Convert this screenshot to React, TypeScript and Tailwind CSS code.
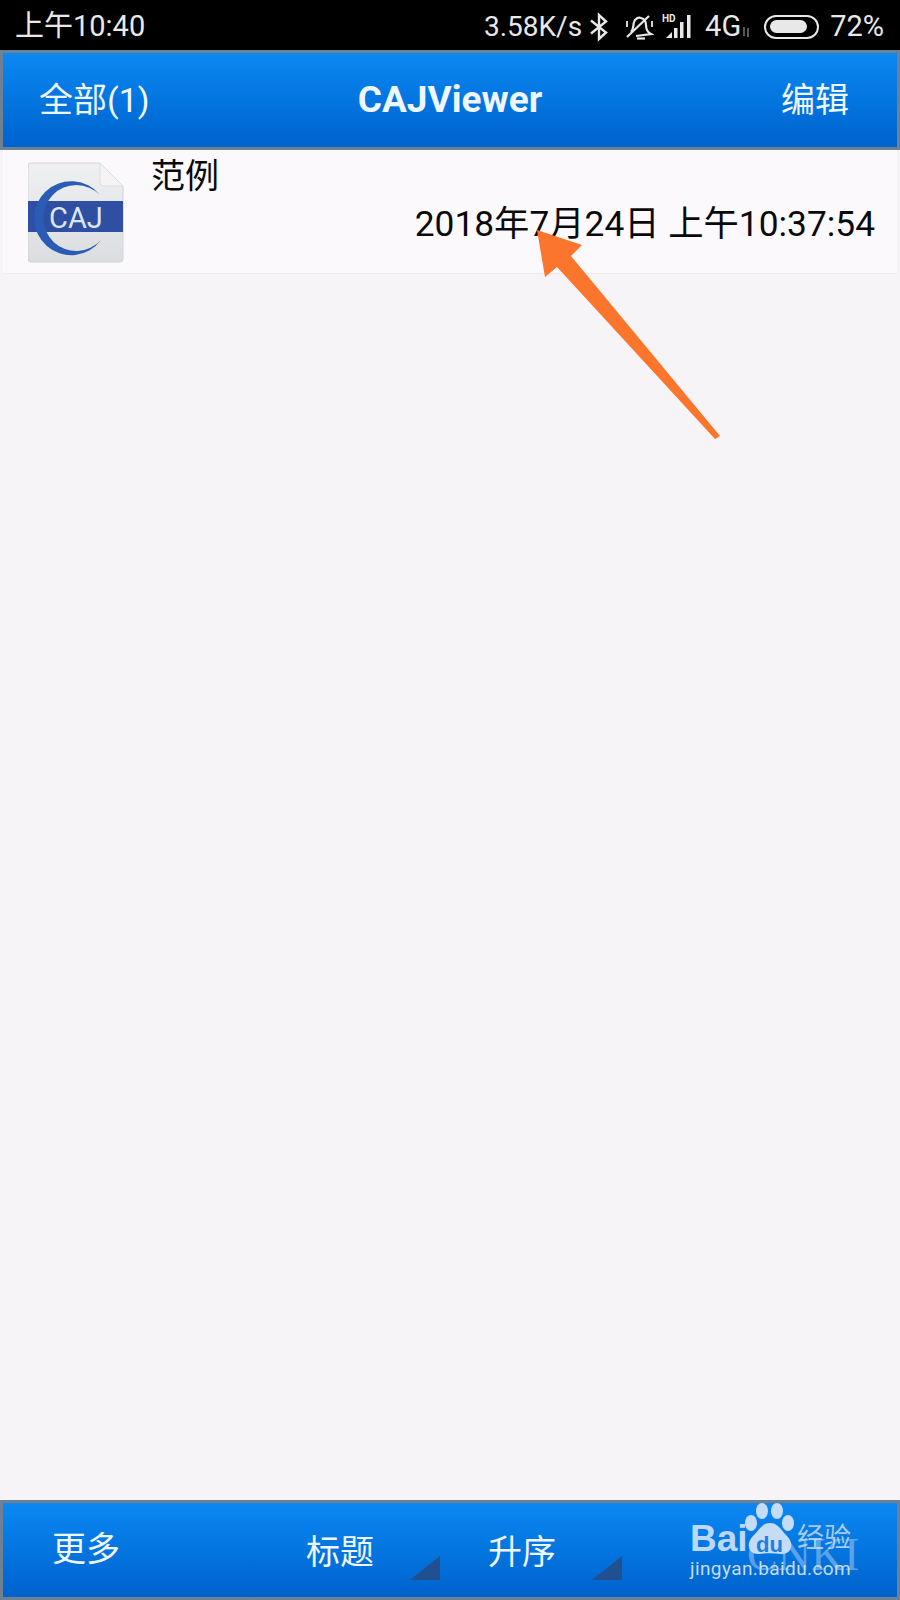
const cjk = "font-['Roboto','Noto_Sans_CJK_SC',sans-serif]";

function StatusIcons() {
  return (
    <>
      <svg width="20" height="30" viewBox="0 0 20 30" fill="none" stroke="#e8e8e8" strokeWidth="2.4" className="ml-[7px]">
        <path d="M2 8.5 L17 20.5 L10 27 V3 L17 9.5 L2 21.5" />
      </svg>
      <svg width="30" height="30" viewBox="0 0 30 30" fill="none" stroke="#e8e8e8" strokeWidth="2.2" className="ml-[15px]">
        <path d="M7 20 C10 17 9 13 10 10 C11 7 14 5 17 6 C21 7 22 10 22 13 C22 17 23 20 27 22 L12 24" />
        <path d="M3 25 L25 4" />
        <path d="M13 26.5 H21" />
        <path d="M3 9 V15 M28 9 V15" strokeWidth="1.8" />
      </svg>
      <svg width="32" height="30" viewBox="0 0 32 30" className="ml-[8px]" fill="#e8e8e8">
        <text x="0" y="10" fontSize="10" fontWeight="700" fontFamily="Roboto, sans-serif">HD</text>
        <path d="M4 26 L10 20 V26 Z" />
        <rect x="12" y="16" width="3.5" height="10" />
        <rect x="18" y="10" width="3.5" height="16" />
        <rect x="25" y="3" width="3.5" height="23" />
      </svg>
    </>
  );
}

function Battery() {
  return (
    <div className="ml-[13px] flex h-[24px] w-[55px] items-center rounded-full border-2 border-[#e8e8e8] px-[4px]">
      <div className="h-[13px] w-[37px] rounded-full bg-[#e8e8e8]" />
    </div>
  );
}

function StatusBar() {
  return (
    <div className="flex h-[50px] items-center justify-between bg-black pl-[15px] pr-[16px] pt-[3px] text-[29px] leading-[47px] text-[#e8e8e8]">
      <span>上午10:40</span>
      <div className="flex items-center">
        <span className="text-[28px]">3.58K/s</span>
        <StatusIcons />
        <span className="ml-[11px]">4G</span>
        <svg width="10" height="10" viewBox="0 0 10 10" stroke="#777" strokeWidth="1.5" className="mt-[10px]">
          <path d="M3 0 V9 M7 1 V10" />
        </svg>
        <Battery />
        <span className="ml-[11px]">72%</span>
      </div>
    </div>
  );
}

function FileIcon() {
  return (
    <svg width="96" height="101" viewBox="0 0 96 101" className="mt-[12px] shrink-0">
      <defs>
        <linearGradient id="sheet" x1="0" y1="0" x2="0" y2="1">
          <stop offset="0" stopColor="#eef0f2" />
          <stop offset="1" stopColor="#dcdde0" />
        </linearGradient>
      </defs>
      <path d="M3 1 H72 L95 24 V97 Q95 100 92 100 H3 Q0 100 0 97 V4 Q0 1 3 1 Z" fill="url(#sheet)" stroke="#d2d3d6" />
      <path d="M72 1 V20 Q72 24 76 24 H95 Z" fill="#f4f4f6" stroke="#dddde0" />
      <rect x="0" y="39" width="95" height="31" fill="#2f4fa3" />
      <path d="M72 33 A37 37 0 1 0 73 78 A33 33 0 1 1 72 33 Z" fill="#2a5cb6" />
      <text x="21" y="66" fontSize="29" fontFamily="Roboto, sans-serif" fill="#dfe6f5">CAJ</text>
    </svg>
  );
}

function Corner() {
  return (
    <svg width="30" height="24" viewBox="0 0 30 24" className="absolute left-[104px] top-[29px]">
      <path d="M30 0 V24 H0 Z" fill="#20508f" />
    </svg>
  );
}

function Arrow() {
  return (
    <svg width="900" height="460" viewBox="0 0 900 460" className="pointer-events-none absolute left-0 top-0">
      <path d="M537 230 L582 245 L571 256 L720 436 L715 439 L557 267 L545 277 Z" fill="#fb762c" />
    </svg>
  );
}

function Watermark() {
  return (
    <div className="pointer-events-none absolute left-[680px] top-[1500px] h-[100px] w-[220px] text-white">
      <span className="absolute left-[67px] top-[32px] font-['Liberation_Serif',serif] text-[46px] leading-[46px] text-white/35">CNKI</span>
      <svg width="52" height="54" viewBox="0 0 52 54" className="absolute left-[64px] top-[3px]" fill="#c5dcf6">
        <ellipse cx="18" cy="8" rx="6" ry="8" />
        <ellipse cx="33" cy="8" rx="6" ry="8" />
        <ellipse cx="7" cy="20" rx="6" ry="8" />
        <ellipse cx="44" cy="20" rx="6" ry="8" />
        <path d="M26 20 C34 20 37 27 43 33 C51 41 47 52 37 51 C30 50 22 50 15 51 C5 52 1 41 9 33 C15 27 18 20 26 20 Z" />
      </svg>
      <span className="absolute left-[10px] top-[19px] font-['Liberation_Sans',sans-serif] text-[37px] font-bold leading-[40px] text-[#bcd8f6]">Bai</span>
      <span className="absolute left-[76px] top-[33px] font-['Liberation_Sans',sans-serif] text-[22px] font-bold leading-[24px] text-[#1f7ce0]">du</span>
      <span className={`absolute left-[117px] top-[22px] ${cjk} text-[27px] leading-[32px] text-[#c5dcf6]/85`}>经验</span>
      <span className="absolute left-[10px] top-[58px] font-['Roboto',sans-serif] text-[19px] leading-[22px] tracking-[0.4px] text-[#c5dcf6]">jingyan.baidu.com</span>
    </div>
  );
}

export default function App() {
  return (
    <div className={`relative flex h-[1600px] w-[900px] flex-col overflow-hidden bg-[#f6f4f6] ${cjk}`}>
      <StatusBar />
      <header className="grid h-[100px] grid-cols-[1fr_auto_1fr] items-center border-[3px] border-[#6f8092] bg-gradient-to-b from-[#0c88f2] to-[#0062cd] pl-[36px] pr-[48px] text-[34px] text-[#eef6fe]">
        <span>全部(1)</span>
        <span className="translate-x-[6px] text-[37px] font-bold">CAJViewer</span>
        <span className="justify-self-end">编辑</span>
      </header>
      <div className="mx-[3px] flex h-[124px] border-b border-[#eeecee] bg-[#fbf9fb] pl-[25px]">
        <FileIcon />
        <div className="flex flex-1 flex-col pl-[27px] pt-[3px] text-[34px] text-[#0a0a0a]">
          <span className="leading-[46px]">范例</span>
          <span className="mt-[2px] self-end pr-[22px] text-[35.3px] leading-[46px]">2018年7月24日 上午10:37:54</span>
        </div>
      </div>
      <div className="flex-1" />
      <footer className="flex h-[100px] items-center border-[3px] border-[#6f8092] bg-gradient-to-b from-[#0c88f2] to-[#0062cd] pl-[49px] text-[34px] text-[#eef6fe]">
        <span className="-mt-[2px] w-[254px]">更多</span>
        <div className="relative mt-[4px] w-[182px]">
          <span>标题</span>
          <Corner />
        </div>
        <div className="relative mt-[4px] w-[182px]">
          <span>升序</span>
          <Corner />
        </div>
      </footer>
      <Arrow />
      <Watermark />
    </div>
  );
}
